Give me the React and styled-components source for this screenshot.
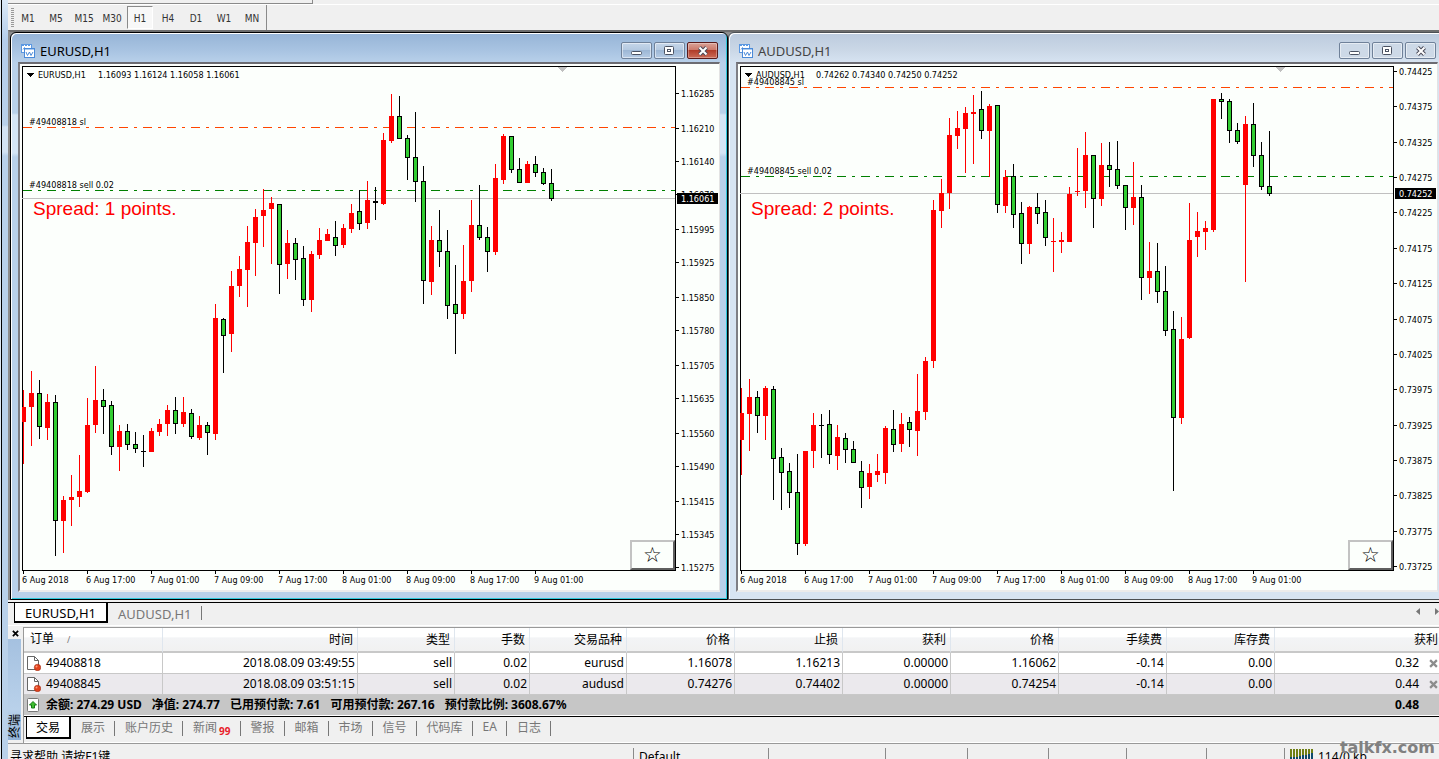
import React from 'react';
import styled, { createGlobalStyle, css } from 'styled-components';

const GlobalStyle = createGlobalStyle`
  * {
    box-sizing: border-box;
  }

  body {
    margin: 0;
    overflow: hidden;
    background: #f0f0f0;
    font-family: 'Noto Sans', 'Noto Sans CJK SC', sans-serif;
    font-size: 12px;
    color: #000;
  }

  button {
    font: inherit;
    color: inherit;
    margin: 0;
    padding: 0;
    border: 0;
    background: none;
  }
`;

const Shell = styled.div`
  position: relative;
  display: flex;
  height: 100vh;
  overflow: hidden;
`;

const Edge = styled.div`
  flex: 0 0 8px;
  border-left: 1px solid #dfe9f3;
  background: linear-gradient(to right, #000 1px, transparent 1px),
    linear-gradient(#dbe9f7 0, #b4cdea 40px, #b9d1ea 125px, #d3e3f3 127px, #d3e3f3 152px, #b9d1ea 156px);
`;

const Main = styled.div`
  flex: 1;
  min-width: 0;
  display: flex;
  flex-direction: column;
`;

const UpperBar = styled.div`
  flex: none;
  width: 305px;
  height: 4px;
  border-right: 1px solid #8a8a8a;
  border-bottom: 1px solid #8a8a8a;
`;

const Toolbar = styled.div`
  flex: none;
  display: flex;
  align-items: center;
  height: 26px;
  padding-left: 3px;
  border-top: 1px solid #fff;
`;

const Grip = styled.div`
  width: 3px;
  height: 19px;
  background: repeating-linear-gradient(#999 0, #999 1px, #f0f0f0 1px, #f0f0f0 2px);
`;

const Periods = styled.div`
  display: flex;
  gap: 2px;
  height: 25px;
  padding: 1px 1px 0;
  border-right: 1px solid #8a8a8a;
`;

const PeriodButton = styled.button`
  width: 26px;
  height: 23px;
  padding-top: 1px;
  border: 1px solid transparent;
  font-family: 'DejaVu Sans Condensed', 'DejaVu Sans', sans-serif;
  font-stretch: condensed;
  font-size: 10px;
  color: #333;

  ${props => props.$active && css`
    background: #f8f8f8;
    border-color: #8a8a8a #fff #fff #8a8a8a;
  `}
`;

/* chart windows */

const Workspace = styled.div`
  flex: none;
  display: grid;
  grid-template-columns: 1fr 1fr;
  margin-right: -7px;
  border-top: 2px solid #6d6d6d;
  border-left: 2px solid #8d8d8d;
  background: #8d8d8d;
`;

const ChartWindow = styled.section`
  min-width: 0;
  padding: 0 7px;
  border: 1px solid ${props => (props.$active ? '#000' : '#4c5054')};
  border-radius: 6px 6px 0 0;
  box-shadow: inset 1px 1px 0 #fff, inset -1px -1px 0 ${props => (props.$active ? '#2fc9dc' : '#d7e4f2')};
  background: ${props => (props.$active
    ? 'linear-gradient(#96b4d6 0, #a9c4e2 18px, #b9d1ea 30px, #b9d1ea 80px, #d5e5f5 82px, #d5e5f5 120px, #b9d1ea 124px)'
    : 'linear-gradient(#bccbde 0, #cbd8e7 18px, #d7e4f2 30px)')};
`;

const TitleBar = styled.header`
  display: flex;
  align-items: center;
  height: 29px;
  padding: 6px 2px 0 3px;
  gap: 5px;
  color: ${props => (props.$active ? '#000' : '#444')};
`;

const Title = styled.h2`
  flex: 1;
  margin: 0;
  font-size: 13px;
  line-height: 16px;
  font-weight: 400;
`;

const CaptionButtons = styled.div`
  display: flex;
  gap: 2px;
`;

const CaptionButton = styled.button`
  display: flex;
  align-items: center;
  justify-content: center;
  width: 31px;
  height: 17px;
  border: 1px solid #6f8199;
  border-radius: 2px;
  box-shadow: inset 0 0 0 1px rgba(255, 255, 255, .5);
  background: ${props => (props.$active
    ? 'linear-gradient(#c5d6e9 0, #b3c8e0 50%, #9db7d5 50%, #b6cce5 100%)'
    : '#cdd9e7')};

  ${props => props.$danger && css`
    border-color: #5a1a1a;
    box-shadow: inset 0 0 0 1px rgba(255, 255, 255, .3);
    background: linear-gradient(#d9a297 0, #cb7566 50%, #b13d2a 50%, #cc6c58 100%);
  `}
`;

const Client = styled.div`
  position: relative;
  display: flex;
  padding: 2px 0 0 2px;
  border: solid;
  border-width: 2px 1px 2px 2px;
  border-color: #6c6c72 #e3e3e3 #ececec #7e7e84;
  background: #fcfffc;
  margin-bottom: 7px;
`;

const Plot = styled.svg`
  flex: 1;
  min-width: 0;
  height: 524px;
  display: block;
`;

const PriceAxis = styled.svg`
  flex: 0 0 44px;
  width: 44px;
  height: 524px;
  display: block;
`;

const SmallText = styled.text`
  font-family: 'DejaVu Sans Condensed', 'DejaVu Sans', sans-serif;
  font-stretch: condensed;
  font-size: 9px;
  fill: ${props => props.$fill || '#000'};
`;

const SpreadText = styled.text`
  font-family: 'Liberation Sans', sans-serif;
  font-size: 19px;
  fill: #f00;
`;

const StarButton = styled.button`
  position: absolute;
  right: 44px;
  bottom: 20px;
  width: 45px;
  height: 30px;
  border: 2px solid;
  border-color: #c3c3c3 #5f5f5f #5f5f5f #c3c3c3;
  background: #fcfffc;
  font-family: 'DejaVu Sans', sans-serif;
  font-size: 21px;
  line-height: 26px;
`;

/* window tabs */

const WindowTabs = styled.nav`
  flex: none;
  display: flex;
  align-items: flex-start;
  height: 24px;
  padding-left: 6px;
  margin-top: 2px;
  border-top: 1px solid #000;
  border-bottom: 1px solid #fff;
`;

const WindowTab = styled.button`
  height: 20px;
  padding: 2px 10px 0;
  font-size: 13px;
  line-height: 16px;
  color: #777;

  ${props => props.$active && css`
    border: solid #000;
    border-width: 0 2px 2px 1px;
    background: #fff;
    color: #000;
  `}
`;

const TabRule = styled.span`
  width: 1px;
  height: 14px;
  margin-top: 3px;
  background: #777;
`;

const TabScroll = styled.div`
  display: flex;
  gap: 15px;
  margin-left: auto;
  padding-top: 5px;
`;

/* terminal */

const Terminal = styled.section`
  flex: none;
  display: flex;
  margin-top: 1px;
`;

const Spine = styled.div`
  flex: 0 0 15px;
  display: flex;
  flex-direction: column;
  align-items: center;
  padding-bottom: 3px;
`;

const SpineClose = styled.button`
  height: 12px;
  line-height: 0;
`;

const SpineLabel = styled.div`
  flex: 1;
  align-self: stretch;
  margin-right: 2px;
  padding-top: 2px;
  writing-mode: vertical-rl;
  text-orientation: sideways;
  transform: rotate(180deg);
  line-height: 13px;
  background: linear-gradient(#8fb0d6, #b9d1ea 30%, #a5c1e0);
`;

const TerminalBody = styled.div`
  flex: 1;
  min-width: 0;
  border-top: 1px solid #999;
  border-left: 1px solid #999;
`;

const Orders = styled.table`
  width: 100%;
  table-layout: fixed;
  border-collapse: separate;
  border-spacing: 0;
  background: #fff;
  font-size: 12px;
  line-height: 16px;

  th,
  td {
    padding: 0;
    text-align: right;
    white-space: nowrap;
    overflow: hidden;
  }

  th:first-child,
  td:first-child {
    text-align: left;
  }
`;

const HeadCell = styled.th`
  && {
    height: 25px;
    padding: 0 4px 0 6px;
    border-right: 1px solid #dfe6ee;
    border-bottom: 2px solid #c8c8c8;
    background: linear-gradient(#fff 0, #fff 40%, #f3f4f6 42%, #f1f1f1 100%);
    font-weight: 400;
  }

  &&:last-child {
    padding-right: 1px;
    border-right: 0;
  }
`;

const SortMark = styled.span`
  margin-left: 13px;
  font-size: 9px;
  color: #777;
`;

const Cell = styled.td`
  && {
    height: 21px;
    padding: 0 2px 0 3px;
    border-right: 1px solid #c8c8c8;
    border-bottom: 1px solid #c8c8c8;
    background: ${props => (props.$odd ? '#ebe9ed' : '#fff')};
  }

  &&:last-child {
    padding-right: 1px;
    border-right: 0;
  }
`;

const Ticket = styled.span`
  display: flex;
  align-items: center;
  gap: 5px;
`;

const Profit = styled.span`
  display: flex;
  align-items: center;
  justify-content: flex-end;
  gap: 10px;

  button {
    line-height: 0;
  }
`;

const Summary = styled.td`
  && {
    height: 21px;
    padding: 0 20px 0 3px;
    background: #c6c6c6;
    border-bottom: 1px solid #fff;
    font-weight: 700;
  }
`;

const Balance = styled.span`
  display: flex;
  align-items: center;
  gap: 7px;
`;

const Figures = styled.span`
  display: flex;
  gap: 10px;
`;

const PageTabs = styled.nav`
  display: flex;
  height: 27px;
  padding-left: 2px;
  border-top: 1px solid #000;
  border-bottom: 1px solid #fff;
`;

const PageTab = styled.button`
  position: relative;
  height: 22px;
  padding: 0 10px 3px;
  color: #777;

  &::after {
    content: '';
    position: absolute;
    right: 0;
    top: 4px;
    height: 15px;
    border-right: 1px solid #777;
  }

  ${props => props.$active && css`
    border: solid #000;
    border-width: 0 2px 2px 1px;
    padding: 0 9px 1px;
    background: #fff;
    color: #000;

    &::after {
      display: none;
    }
  `}
`;

const Count = styled.sub`
  margin-left: 2px;
  font-size: 10px;
  line-height: 0;
  font-weight: 700;
  color: #e8202a;
`;

/* status bar */

const StatusBar = styled.footer`
  flex: none;
  display: flex;
  height: 28px;
  padding-top: 4px;
  border-top: 1px solid #999;
`;

const StatusCell = styled.div`
  display: flex;
  align-items: center;
  gap: 4px;
  flex: 0 0 ${props => props.$width}px;
  height: 16px;
  padding-left: ${props => (props.$first ? 2 : 5)}px;
  border-left: ${props => (props.$first ? '0' : '1px solid #8a8a8a')};
  white-space: nowrap;

  ${props => props.$grow && css`
    flex: 1;
  `}
`;

const Watermark = styled.div`
  position: absolute;
  right: 4px;
  bottom: 2px;
  font-family: 'DejaVu Sans', sans-serif;
  font-weight: 700;
  font-size: 16px;
  line-height: 18px;
  color: #808080;
`;

// candles are [colour, high, body top, body bottom, low], measured down the window
const TOP = 66;
const STEP = 8;

const EURUSD = {
  symbol: 'EURUSD,H1',
  quote: '1.16093 1.16124 1.16058 1.16061',
  spread: 'Spread: 1 points.',
  order: '#49408818',
  stop: 127,
  entry: 190,
  price: 198,
  last: '1.16061',
  prices: [
    ['1.16285', 93], ['1.16210', 128], ['1.16140', 161], ['1.16070', 194], ['1.15995', 229],
    ['1.15925', 262], ['1.15850', 297], ['1.15780', 330], ['1.15705', 365], ['1.15635', 398],
    ['1.15560', 433], ['1.15490', 466], ['1.15415', 501], ['1.15345', 534], ['1.15275', 567],
  ],
  candles: [
    ['r', 390, 407, 422, 464], ['r', 371, 393, 407, 446], ['g', 380, 393, 427, 439],
    ['r', 394, 402, 428, 440], ['g', 395, 402, 521, 556], ['r', 496, 500, 521, 553],
    ['r', 475, 497, 500, 526], ['r', 455, 491, 497, 507], ['r', 398, 425, 492, 493],
    ['r', 366, 400, 425, 433], ['g', 389, 400, 407, 434], ['g', 401, 405, 447, 455],
    ['r', 425, 431, 447, 471], ['g', 424, 431, 445, 450], ['g', 432, 444, 449, 453],
    ['b', 435, 451, 452, 467], ['r', 428, 431, 452, 452], ['r', 419, 424, 432, 436],
    ['r', 405, 410, 424, 436], ['g', 397, 410, 424, 434], ['r', 397, 412, 424, 427],
    ['g', 409, 413, 437, 439], ['r', 416, 425, 438, 440], ['g', 422, 425, 433, 455],
    ['r', 304, 318, 434, 440], ['g', 318, 319, 336, 373], ['r', 271, 286, 334, 352],
    ['r', 256, 269, 286, 297], ['r', 226, 242, 270, 307], ['r', 209, 217, 243, 276],
    ['r', 189, 210, 216, 247], ['r', 197, 203, 209, 264], ['g', 204, 204, 265, 294],
    ['r', 230, 243, 264, 279], ['g', 238, 243, 260, 280], ['g', 246, 258, 300, 306],
    ['r', 251, 254, 300, 312], ['r', 228, 240, 255, 259], ['r', 229, 234, 241, 241],
    ['g', 221, 237, 246, 256], ['r', 224, 228, 245, 248], ['r', 204, 213, 229, 233],
    ['g', 190, 211, 224, 230], ['r', 181, 200, 223, 229], ['b', 187, 201, 203, 220],
    ['r', 133, 140, 204, 205], ['r', 94, 116, 141, 143], ['g', 96, 116, 139, 139],
    ['g', 135, 138, 158, 180], ['g', 112, 157, 182, 202], ['g', 166, 181, 281, 304],
    ['r', 226, 240, 282, 295], ['g', 210, 240, 252, 267], ['g', 230, 251, 306, 319],
    ['g', 265, 304, 314, 354], ['r', 245, 281, 314, 319], ['r', 200, 225, 281, 292],
    ['g', 185, 225, 238, 240], ['g', 227, 237, 252, 272], ['r', 164, 178, 252, 255],
    ['r', 134, 136, 180, 184], ['g', 136, 136, 170, 173], ['g', 158, 169, 183, 183],
    ['r', 161, 164, 183, 183], ['g', 156, 164, 173, 177], ['g', 168, 172, 184, 185],
    ['g', 169, 183, 199, 201],
  ],
};

const AUDUSD = {
  symbol: 'AUDUSD,H1',
  quote: '0.74262 0.74340 0.74250 0.74252',
  spread: 'Spread: 2 points.',
  order: '#49408845',
  stop: 87,
  entry: 176,
  price: 193,
  last: '0.74252',
  prices: [
    ['0.74425', 71], ['0.74375', 106], ['0.74325', 142], ['0.74275', 177], ['0.74225', 212],
    ['0.74175', 248], ['0.74125', 283], ['0.74075', 319], ['0.74025', 354], ['0.73975', 389],
    ['0.73925', 425], ['0.73875', 460], ['0.73825', 495], ['0.73775', 531], ['0.73725', 566],
  ],
  candles: [
    ['r', 388, 413, 440, 475], ['r', 379, 397, 414, 451], ['g', 391, 397, 416, 433],
    ['r', 386, 388, 416, 440], ['g', 386, 389, 459, 500], ['g', 448, 457, 473, 510],
    ['g', 463, 471, 493, 508], ['g', 454, 492, 544, 555], ['r', 451, 451, 544, 546],
    ['r', 413, 425, 451, 468], ['b', 414, 425, 426, 458], ['g', 410, 424, 455, 464],
    ['r', 425, 437, 456, 470], ['g', 433, 438, 450, 463], ['g', 441, 449, 463, 463],
    ['g', 461, 471, 488, 508], ['r', 464, 473, 487, 499], ['r', 454, 471, 475, 482],
    ['r', 426, 428, 473, 484], ['g', 410, 429, 445, 452], ['r', 413, 424, 444, 452],
    ['g', 417, 422, 430, 447], ['r', 374, 411, 431, 456], ['r', 357, 361, 412, 420],
    ['r', 200, 210, 361, 368], ['r', 179, 193, 211, 228], ['r', 118, 135, 193, 209],
    ['r', 111, 128, 136, 149], ['r', 107, 113, 129, 173], ['r', 95, 112, 114, 164],
    ['g', 91, 109, 131, 139], ['r', 104, 106, 131, 177], ['g', 105, 105, 205, 213],
    ['r', 170, 177, 206, 213], ['g', 164, 176, 215, 228], ['g', 202, 213, 244, 264],
    ['r', 206, 207, 244, 254], ['g', 193, 207, 214, 224], ['g', 200, 212, 238, 246],
    ['r', 218, 241, 242, 272], ['r', 232, 240, 242, 253], ['r', 187, 194, 242, 242],
    ['r', 148, 191, 192, 196], ['r', 132, 155, 191, 208], ['g', 155, 155, 199, 228],
    ['r', 143, 165, 199, 206], ['g', 142, 165, 170, 187], ['g', 141, 169, 186, 189],
    ['g', 185, 185, 208, 230], ['r', 162, 197, 208, 225], ['g', 185, 197, 278, 300],
    ['r', 242, 271, 278, 294], ['g', 243, 271, 292, 303], ['g', 266, 291, 331, 336],
    ['g', 311, 329, 418, 491], ['r', 317, 339, 418, 424], ['r', 203, 240, 338, 339],
    ['r', 212, 231, 237, 257], ['r', 221, 228, 232, 250], ['r', 99, 99, 230, 232],
    ['g', 93, 99, 102, 119], ['g', 99, 101, 131, 143], ['g', 123, 130, 142, 144],
    ['r', 116, 124, 185, 282], ['g', 103, 124, 156, 167], ['g', 142, 155, 187, 190],
    ['g', 131, 186, 194, 196],
  ],
};

const DATES = [
  '6 Aug 2018', '6 Aug 17:00', '7 Aug 01:00', '7 Aug 09:00', '7 Aug 17:00',
  '8 Aug 01:00', '8 Aug 09:00', '8 Aug 17:00', '9 Aug 01:00',
];

const PERIODS = ['M1', 'M5', 'M15', 'M30', 'H1', 'H4', 'D1', 'W1', 'MN'];

const COLUMNS = ['订单', '时间', '类型', '手数', '交易品种', '价格', '止损', '获利', '价格', '手续费', '库存费', '获利'];
const COLUMN_WIDTHS = [139, 195, 97, 75, 97, 108, 108, 108, 108, 108, 108];

const ORDERS = [
  ['49408818', '2018.08.09 03:49:55', 'sell', '0.02', 'eurusd', '1.16078', '1.16213', '0.00000', '1.16062', '-0.14', '0.00', '0.32'],
  ['49408845', '2018.08.09 03:51:15', 'sell', '0.02', 'audusd', '0.74276', '0.74402', '0.00000', '0.74254', '-0.14', '0.00', '0.44'],
];

const PAGES = ['交易', '展示', '账户历史', '新闻', '警报', '邮箱', '市场', '信号', '代码库', 'EA', '日志'];

const Candle = ({ x, data: [kind, high, top, bottom, low] }) => {
  const ink = kind === 'r' ? '#f00' : '#000';
  return (
    <g>
      <rect x={x} y={high - TOP} width="1" height={low - high} fill={ink} />
      <rect x={x - 2} y={top - TOP} width="5" height={bottom - top} fill={ink} />
      {kind === 'g' && (
        <rect x={x - 1} y={top - TOP + 1} width="3" height={bottom - top - 2} fill="#32cd32" />
      )}
    </g>
  );
};

const Level = ({ y, color }) => (
  <line x1="1" x2="100%" y1={y - TOP + 0.5} y2={y - TOP + 0.5} stroke={color} strokeDasharray="9 6 3 6" />
);

const ChartIcon = () => (
  <svg width="14" height="14" viewBox="0 0 14 14" fill="none">
    <rect x="0.5" y="0.5" width="10" height="8" fill="#fff" stroke="#5b98e2" />
    <path d="M1 1.5h9" stroke="#5b98e2" strokeDasharray="2 1" />
    <path d="M2 5.5l1.5-2 1.5 2M6 4.5h2" stroke="#5b98e2" />
    <rect x="3.5" y="4.5" width="10" height="9" fill="#fff" stroke="#4a8ad8" />
    <path d="M4 5.5h9" stroke="#a9cbf2" />
    <path d="M5 8l1.5 3.5L8.5 8l1.5 3.5L12 8" stroke="#4a8ad8" />
  </svg>
);

const MinimizeIcon = () => (
  <svg width="12" height="11">
    <rect x="0.5" y="6.5" width="10" height="3" rx="1" fill="#fff" stroke="#4a5262" />
  </svg>
);

const MaximizeIcon = () => (
  <svg width="11" height="9" fill="none">
    <rect x="0.5" y="0.5" width="9" height="8" rx="1" fill="#fff" stroke="#4a5262" />
    <rect x="3.5" y="3.5" width="3" height="2" stroke="#4a5262" />
  </svg>
);

const CloseIcon = () => (
  <svg width="12" height="10" fill="none">
    <path d="M2.5 1.5l7 7M9.5 1.5l-7 7" stroke="#4a4a58" strokeWidth="4" />
    <path d="M2.5 1.5l7 7M9.5 1.5l-7 7" stroke="#fff" strokeWidth="2" />
  </svg>
);

const CrossIcon = ({ size, color, weight }) => (
  <svg width={size} height={size} viewBox="0 0 8 8">
    <path d="M1 1l6 6M7 1L1 7" stroke={color} strokeWidth={weight} />
  </svg>
);

const OrderIcon = () => (
  <svg width="14" height="15" viewBox="0 0 14 15">
    <path d="M0.5 0.5h7l4 4v9h-11z" fill="#fff" stroke="#666" />
    <path d="M7.5 0.5v4h4" fill="none" stroke="#666" />
    <circle cx="10.5" cy="11.500" r="3.200" fill="#e2431e" stroke="#9c2a10" strokeWidth="0.600" />
    <circle cx="9.500" cy="10.500" r="1" fill="#ff9b78" />
  </svg>
);

const BalanceIcon = () => (
  <svg width="12" height="14" viewBox="0 0 12 14">
    <rect x="0.5" y="0.5" width="11" height="13" rx="1" fill="#fff" stroke="#777" />
    <path d="M6 3.5L9.5 7H7.500v3h-3V7h-2z" fill="#3fbf2f" stroke="#167a16" />
  </svg>
);

const SignalIcon = () => (
  <svg width="24" height="14" shapeRendering="crispEdges">
    {[8, 8, 8, 7, 6, 6, 5, 4].map((h, i) => (
      <g key={i}>
        <rect x={i * 3} y="0" width="2" height="14" fill="#0f4a6b" />
        <rect x={i * 3} y="0" width="2" height={h} fill="#6f7f14" />
      </g>
    ))}
  </svg>
);

const Chart = ({ chart, active }) => (
  <ChartWindow $active={active}>
    <TitleBar $active={active}>
      <ChartIcon />
      <Title>{chart.symbol}</Title>
      <CaptionButtons>
        <CaptionButton $active={active} aria-label="Minimize"><MinimizeIcon /></CaptionButton>
        <CaptionButton $active={active} aria-label="Maximize"><MaximizeIcon /></CaptionButton>
        <CaptionButton $active={active} $danger={active} aria-label="Close"><CloseIcon /></CaptionButton>
      </CaptionButtons>
    </TitleBar>
    <Client>
      <Plot>
        <g shapeRendering="crispEdges">
          <rect width="100%" height="1" />
          <rect width="1" height="505" />
          <rect y="504" width="100%" height="1" />
          <rect y={chart.price - TOP} width="100%" height="1" fill="#c0c0c0" />
          <Level y={chart.stop} color="#ff4500" />
          <Level y={chart.entry} color="#008000" />
          <path d="M536 1h9l-4.500 5z" fill="#c0c0c0" />
          <path d="M4 7h8l-4 4z" />
          {chart.candles.map((c, i) => (
            <Candle key={i} x={1 + i * STEP} data={c} />
          ))}
          {DATES.map((d, i) => (
            <rect key={d} x={1 + i * 64} y="504" width="1" height="4" />
          ))}
        </g>
        <SmallText x="16" y="12">{chart.symbol}</SmallText>
        <SmallText x="76" y="12">{chart.quote}</SmallText>
        <SmallText x="7" y={chart.stop - TOP - 2}>{`${chart.order} sl`}</SmallText>
        <SmallText x="7" y={chart.entry - TOP - 2}>{`${chart.order} sell 0.02`}</SmallText>
        <SpreadText x="11" y="149">{chart.spread}</SpreadText>
        {DATES.map((d, i) => (
          <SmallText key={d} x={i * 64} y="517">{d}</SmallText>
        ))}
      </Plot>
      <PriceAxis>
        <rect width="1" height="505" />
        {chart.prices.map(([label, y]) => (
          <g key={label}>
            <rect y={y - TOP} width="4" height="1" />
            <SmallText x="6" y={y - TOP + 4}>{label}</SmallText>
          </g>
        ))}
        <rect x="2" y={chart.price - TOP - 5} width="41" height="11" />
        <SmallText x="6" y={chart.price - TOP + 4} $fill="#fff">{chart.last}</SmallText>
      </PriceAxis>
      <StarButton aria-label="Favourite">☆</StarButton>
    </Client>
  </ChartWindow>
);

const OrderTable = () => (
  <Orders>
    <colgroup>
      {COLUMN_WIDTHS.map((w, i) => <col key={i} width={w} />)}
      <col />
    </colgroup>
    <thead>
      <tr>
        {COLUMNS.map((name, i) => (
          <HeadCell key={i} scope="col">
            {name}
            {i === 0 && <SortMark>/</SortMark>}
          </HeadCell>
        ))}
      </tr>
    </thead>
    <tbody>
      {ORDERS.map((row, r) => (
        <tr key={row[0]}>
          {row.map((value, i) => (
            <Cell key={i} $odd={r % 2 === 1}>
              {i === 0 && <Ticket><OrderIcon />{value}</Ticket>}
              {i > 0 && i < row.length - 1 && value}
              {i === row.length - 1 && (
                <Profit>
                  {value}
                  <button aria-label="Close order"><CrossIcon size={9} color="#8c8c8c" weight={2} /></button>
                </Profit>
              )}
            </Cell>
          ))}
        </tr>
      ))}
      <tr>
        <Summary colSpan={11}>
          <Balance>
            <BalanceIcon />
            <Figures>
              <span>余额: 274.29 USD</span>
              <span>净值: 274.77</span>
              <span>已用预付款: 7.61</span>
              <span>可用预付款: 267.16</span>
              <span>预付款比例: 3608.67%</span>
            </Figures>
          </Balance>
        </Summary>
        <Summary>0.48</Summary>
      </tr>
    </tbody>
  </Orders>
);

const App = () => (
  <Shell>
    <GlobalStyle />
    <Edge />
    <Main>
      <UpperBar />
      <Toolbar>
        <Grip />
        <Periods>
          {PERIODS.map(p => (
            <PeriodButton key={p} $active={p === 'H1'}>{p}</PeriodButton>
          ))}
        </Periods>
      </Toolbar>
      <Workspace>
        <Chart chart={EURUSD} active />
        <Chart chart={AUDUSD} />
      </Workspace>
      <WindowTabs>
        <WindowTab $active>EURUSD,H1</WindowTab>
        <WindowTab>AUDUSD,H1</WindowTab>
        <TabRule />
        <TabScroll>
          <svg width="4" height="7"><path d="M4 0v7L0 3.500z" fill="#777" /></svg>
          <svg width="4" height="7"><path d="M0 0v7l4-3.500z" fill="#777" /></svg>
        </TabScroll>
      </WindowTabs>
      <Terminal>
        <Spine>
          <SpineClose aria-label="Close terminal"><CrossIcon size={7} color="#000" weight={2} /></SpineClose>
          <SpineLabel>终端</SpineLabel>
        </Spine>
        <TerminalBody>
          <OrderTable />
          <PageTabs>
            {PAGES.map((name, i) => (
              <PageTab key={name} $active={i === 0}>
                {name}
                {name === '新闻' && <Count>99</Count>}
              </PageTab>
            ))}
          </PageTabs>
        </TerminalBody>
      </Terminal>
      <StatusBar>
        <StatusCell $first $grow>寻求帮助,请按F1键</StatusCell>
        <StatusCell $width={135}>Default</StatusCell>
        <StatusCell $width={117} />
        <StatusCell $width={82} />
        <StatusCell $width={81} />
        <StatusCell $width={78} />
        <StatusCell $width={80} />
        <StatusCell $width={78} />
        <StatusCell $width={155}><SignalIcon />114/0 kb</StatusCell>
      </StatusBar>
    </Main>
    <Watermark>talkfx.com</Watermark>
  </Shell>
);

export default App;
